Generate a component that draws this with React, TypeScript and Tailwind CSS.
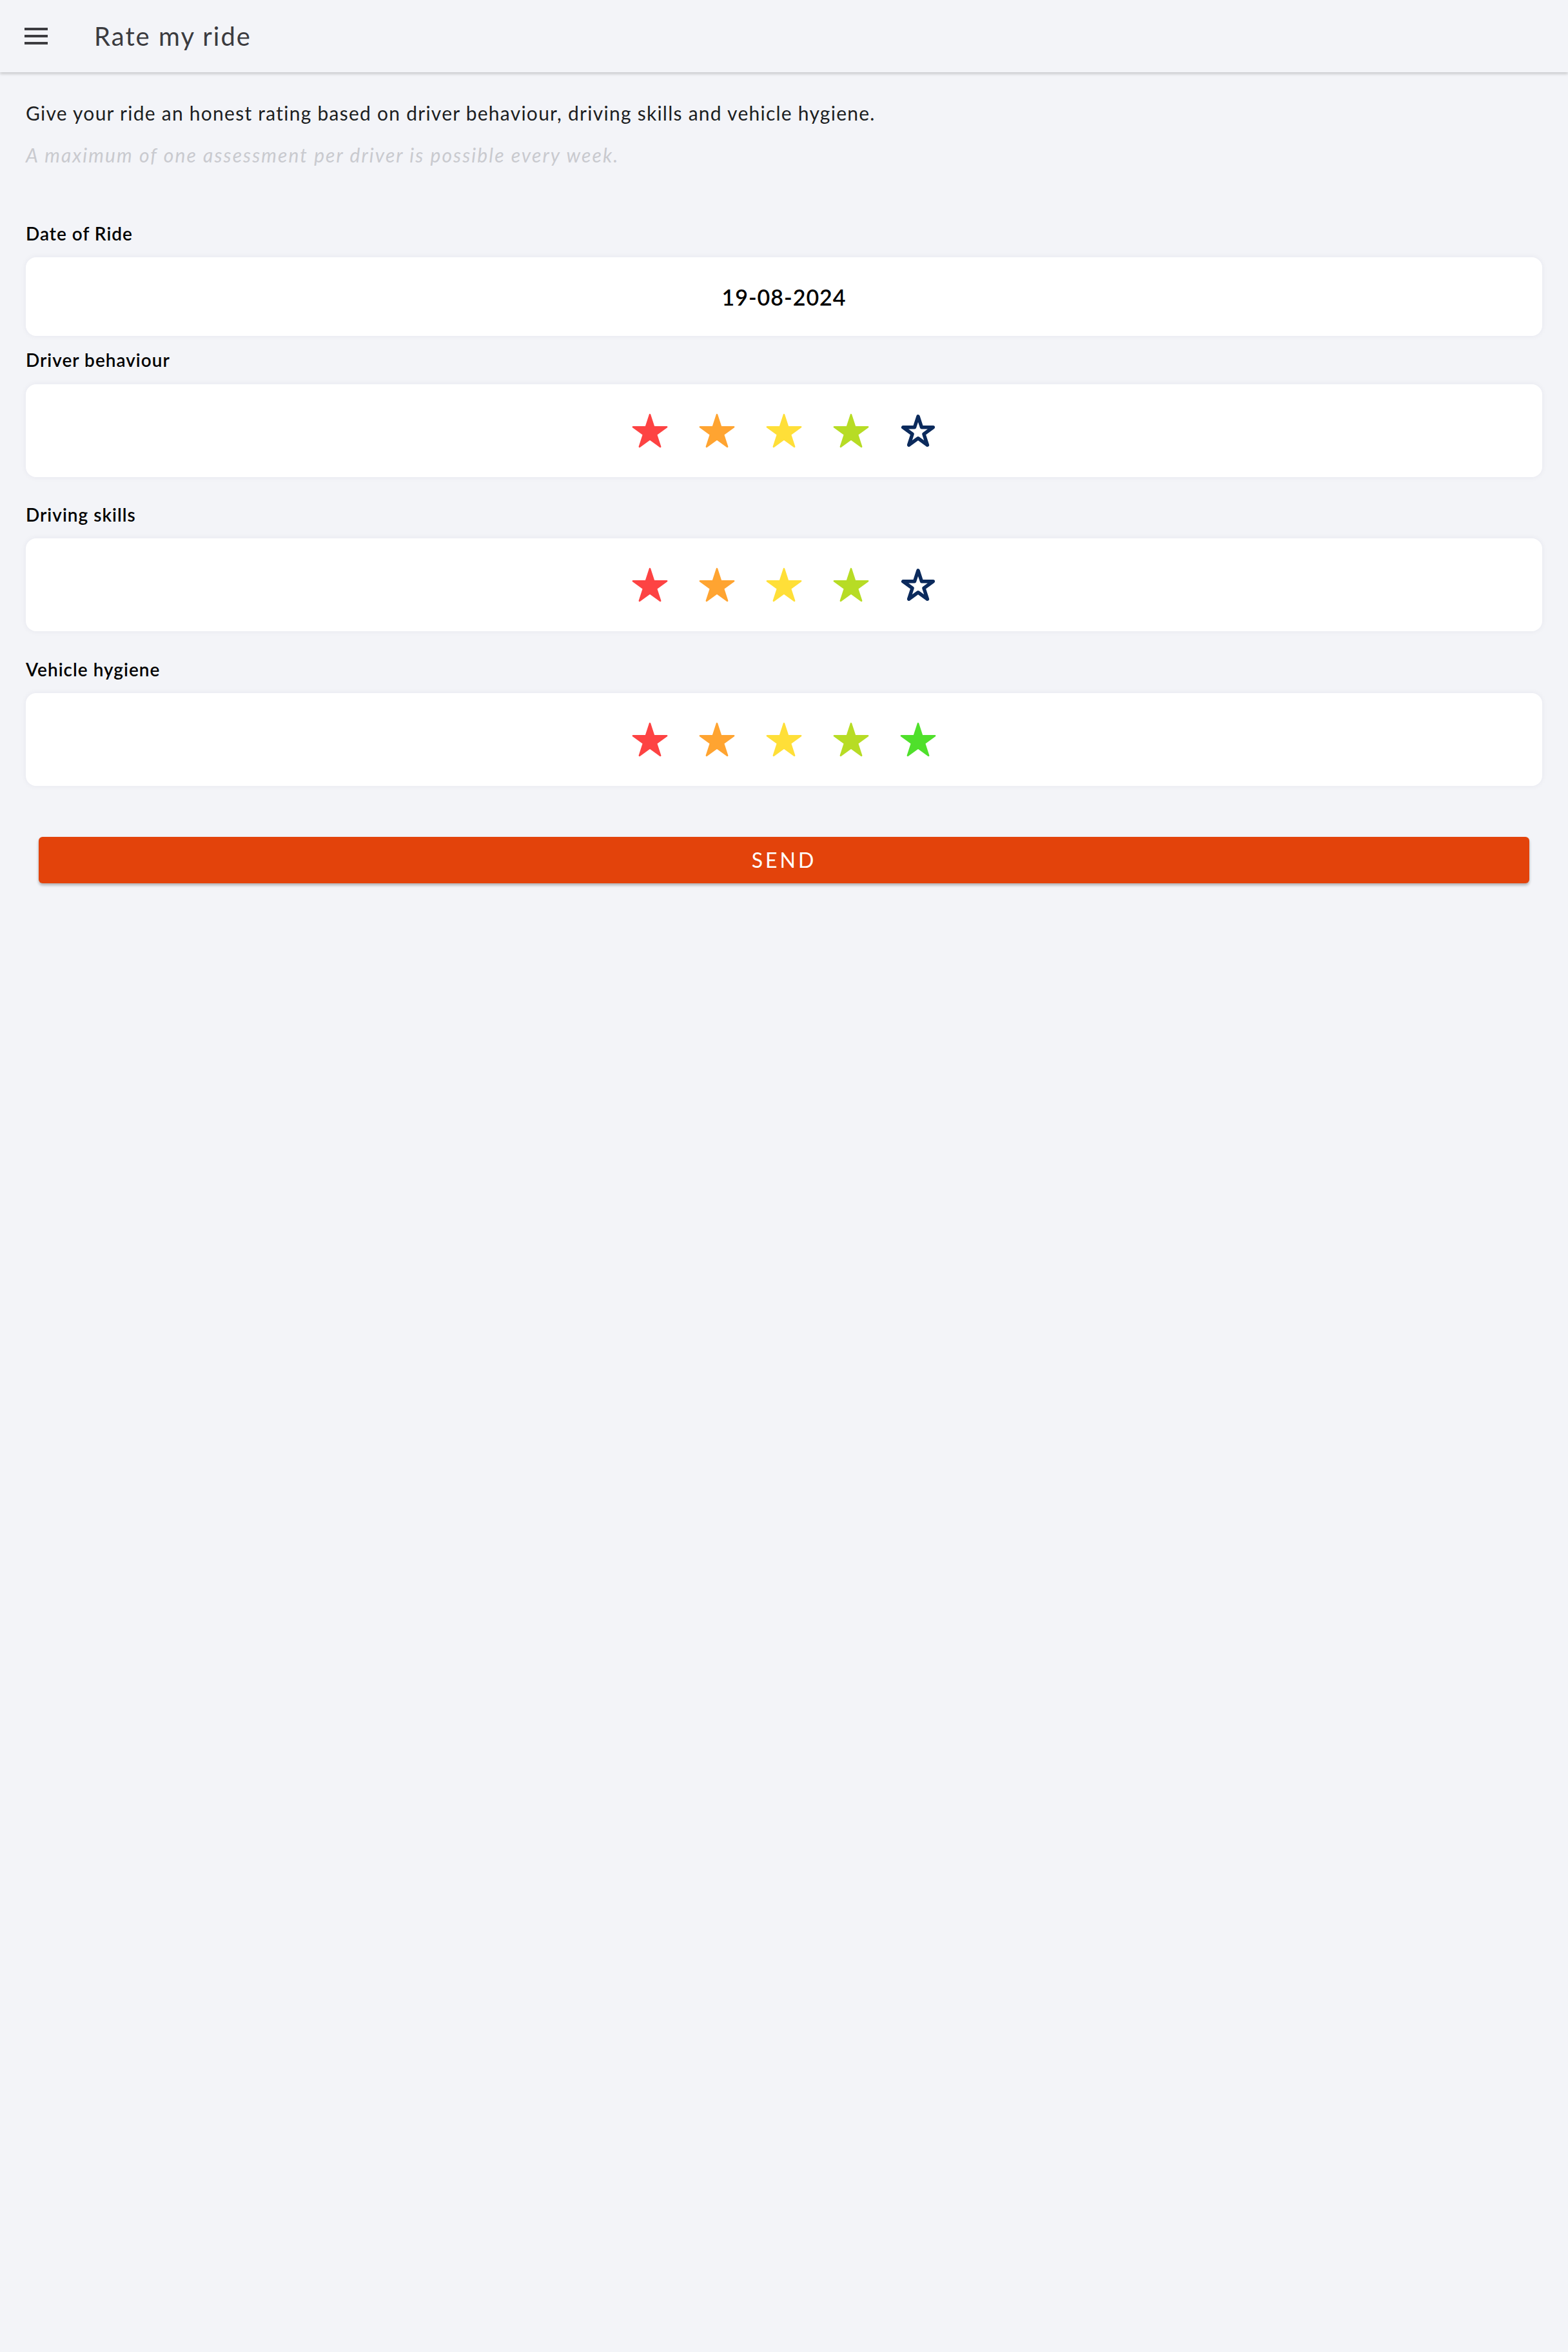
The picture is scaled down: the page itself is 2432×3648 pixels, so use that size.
const font = { fontFamily: 'Lato, "Open Sans", sans-serif' }

interface StarProps {
  color: string
  filled: boolean
}

const starPoints = (R: number) => {
  const cx = 30
  const cy = 30 + 0.0955 * R
  const r = R * 0.382
  const pts: string[] = []
  for (let i = 0; i < 10; i++) {
    const rad = i % 2 === 0 ? R : r
    const a = (Math.PI / 5) * i - Math.PI / 2
    pts.push(`${(cx + rad * Math.cos(a)).toFixed(2)},${(cy + rad * Math.sin(a)).toFixed(2)}`)
  }
  return pts.join(' ')
}

const Star = ({ color, filled }: StarProps) => (
  <svg width="60" height="60" viewBox="0 0 60 60">
    {filled ? (
      <polygon
        points={starPoints(27.5)}
        fill={color}
        stroke={color}
        strokeWidth="2.5"
        strokeLinejoin="round"
      />
    ) : (
      <polygon
        points={starPoints(24.5)}
        fill="none"
        stroke={color}
        strokeWidth="5.5"
        strokeLinejoin="round"
      />
    )}
  </svg>
)

const colors = ['#fd4343', '#ffa431', '#ffdf38', '#b7dc25', '#4fe02b']

const Rating = ({ value }: { value: number }) => (
  <div className="flex h-[144px] items-center justify-center gap-[44px] rounded-[16px] bg-white shadow-[0_0_10px_rgba(40,40,80,0.06)]">
    {colors.map((c, i) => (
      <Star key={i} color={i < value ? c : '#0b2a5c'} filled={i < value} />
    ))}
  </div>
)

const Label = ({ text, className }: { text: string; className: string }) => (
  <div className={`h-[36px] text-[28px] leading-[36px] font-semibold tracking-[1px] text-black ${className}`}>
    {text}
  </div>
)

export default function App() {
  return (
    <div className="min-h-[3648px] w-full bg-[#f3f4f8]" style={font}>
      <header className="flex h-[112px] items-center bg-[#f3f4f8] shadow-[0_3px_4px_rgba(0,0,0,0.16)]">
        <div className="ml-[38px] flex w-[36px] flex-col gap-[7px]">
          <span className="h-[4px] bg-[#3c3c40]" />
          <span className="h-[4px] bg-[#3c3c40]" />
          <span className="h-[4px] bg-[#3c3c40]" />
        </div>
        <h1 className="ml-[72px] text-[40px] tracking-[2px] text-[#3b3b3f]">Rate my ride</h1>
      </header>

      <main className="px-[40px]">
        <p className="mt-[43px] h-[40px] text-[30px] leading-[40px] tracking-[1.25px] text-[#1c1e22]">
          Give your ride an honest rating based on driver behaviour, driving skills and vehicle hygiene.
        </p>
        <p className="mt-[25px] h-[40px] text-[30px] italic leading-[40px] tracking-[2.1px] text-[#c9cacf]">
          A maximum of one assessment per driver is possible every week.
        </p>

        <Label text="Date of Ride" className="mt-[84px]" />
        <div className="mt-[19px] flex h-[122px] items-center justify-center rounded-[16px] bg-white text-[34px] font-semibold tracking-[1px] text-black shadow-[0_0_10px_rgba(40,40,80,0.06)]">
          19-08-2024
        </div>

        <Label text="Driver behaviour" className="mt-[19px]" />
        <div className="mt-[20px]">
          <Rating value={4} />
        </div>

        <Label text="Driving skills" className="mt-[40px]" />
        <div className="mt-[19px]">
          <Rating value={4} />
        </div>

        <Label text="Vehicle hygiene" className="mt-[41px]" />
        <div className="mt-[19px]">
          <Rating value={5} />
        </div>

        <div className="mt-[79px] px-[20px]">
          <button className="flex h-[72px] w-full items-center justify-center rounded-[6px] bg-[#e3430b] text-[32px] tracking-[4px] text-white shadow-[0_3px_4px_rgba(0,0,0,0.28)]">
            SEND
          </button>
        </div>
      </main>
    </div>
  )
}
